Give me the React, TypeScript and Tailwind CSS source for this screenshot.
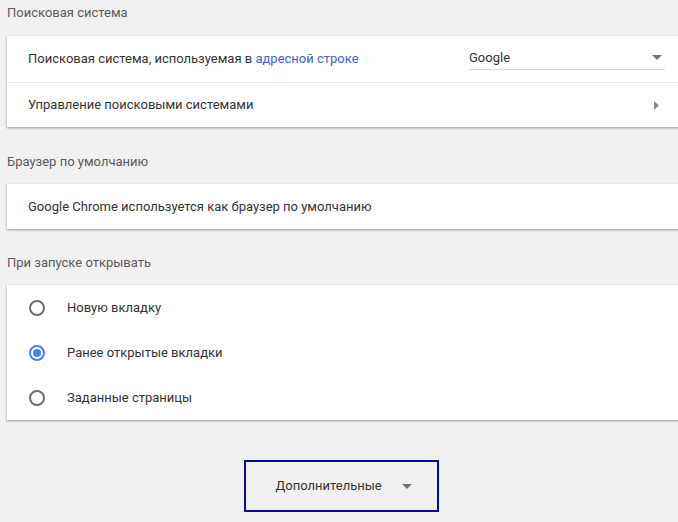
import React from "react";

function Radio({ checked }: { checked?: boolean }) {
  return (
    <span
      className={
        "flex h-[16px] w-[16px] items-center justify-center rounded-full border-2 " +
        (checked ? "border-[#4285f4]" : "border-[#6e6e6e]")
      }
    >
      {checked && <span className="h-[8px] w-[8px] rounded-full bg-[#4285f4]" />}
    </span>
  );
}

function DownArrow({ color = "#757575" }: { color?: string }) {
  return (
    <svg width="10" height="5" viewBox="0 0 10 5">
      <path d="M0 0 L10 0 L5 5 Z" fill={color} />
    </svg>
  );
}

export default function App() {
  const font = { fontFamily: "Roboto, 'Noto Sans', Arial, sans-serif" };
  return (
    <div
      className="h-[522px] w-[678px] overflow-hidden bg-[#f1f1f1] text-[13px] text-[#333333]"
      style={font}
    >
      <div className="pl-[7px] pt-[3px] text-[13px] leading-[20px] font-normal text-[#5a5a5a]">
        Поисковая система
      </div>
      <div className="ml-[7px] mt-[13px] w-[680px] bg-white shadow-[0_1px_2px_rgba(0,0,0,0.3),0_1px_3px_rgba(0,0,0,0.1)]">
        <div className="flex h-[46px] items-center pl-[21px]">
          <span className="leading-[20px]">
            Поисковая система, используемая в{" "}
            <span className="text-[#3b65c0]">адресной строке</span>
          </span>
          <div className="ml-auto mr-[22px] flex h-[22px] w-[196px] items-center justify-between border-b border-[#dadada] pb-[2px]">
            <span className="leading-[20px] text-[#333333]">Google</span>
            <span className="mr-[3px]">
              <DownArrow />
            </span>
          </div>
        </div>
        <div className="h-px bg-[#e8e8e8]" />
        <div className="flex h-[44px] items-center pl-[21px]">
          <span className="leading-[20px]">Управление поисковыми системами</span>
          <svg className="ml-auto mr-[28px]" width="5" height="9" viewBox="0 0 5 9">
            <path d="M0 0 L5 4.5 L0 9 Z" fill="#8a8a8a" />
          </svg>
        </div>
      </div>

      <div className="pl-[7px] pt-[25px] text-[13px] leading-[20px] font-normal text-[#5a5a5a]">
        Браузер по умолчанию
      </div>
      <div className="ml-[7px] mt-[12px] flex h-[45px] w-[680px] items-center bg-white pl-[21px] shadow-[0_1px_2px_rgba(0,0,0,0.3),0_1px_3px_rgba(0,0,0,0.1)]">
        <span className="leading-[20px]">Google Chrome используется как браузер по умолчанию</span>
      </div>

      <div className="pl-[7px] pt-[24px] text-[13px] leading-[20px] font-normal text-[#5a5a5a]">
        При запуске открывать
      </div>
      <div className="ml-[7px] mt-[12px] w-[680px] bg-white shadow-[0_1px_2px_rgba(0,0,0,0.3),0_1px_3px_rgba(0,0,0,0.1)]">
        {[
          { label: "Новую вкладку", checked: false },
          { label: "Ранее открытые вкладки", checked: true },
          { label: "Заданные страницы", checked: false },
        ].map((r) => (
          <div key={r.label} className="flex h-[45px] items-center pl-[22px]">
            <Radio checked={r.checked} />
            <span className="ml-[22px] leading-[20px]">{r.label}</span>
          </div>
        ))}
      </div>

      <div className="mt-[40px] flex justify-center pl-[4px]">
        <div className="flex h-[52px] w-[195px] items-center border-2 border-[#0a0aa0] pl-[30px]">
          <span className="leading-[20px] text-[#333333]">Дополнительные</span>
          <span className="ml-[20px] mt-[1px]">
            <DownArrow />
          </span>
        </div>
      </div>
    </div>
  );
}
